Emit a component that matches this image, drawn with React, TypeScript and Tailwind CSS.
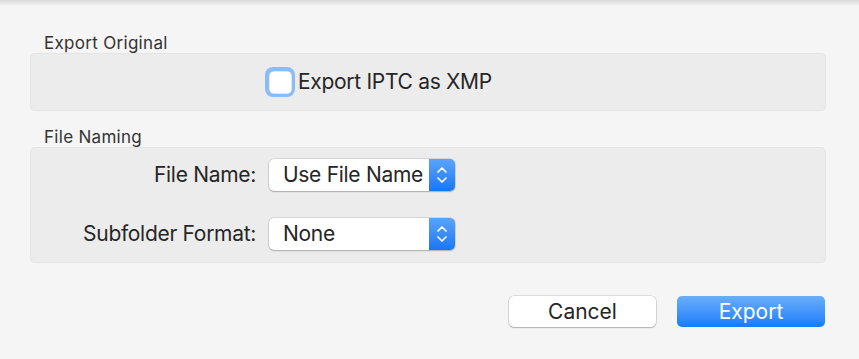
import React from "react";

function Stepper() {
  return (
    <div className="flex h-full w-[26px] items-center justify-center rounded-r-[5px] bg-gradient-to-b from-[#5aa3fa] to-[#1677f6]">
      <svg width="12" height="22" viewBox="0 0 12 22" fill="none">
        <path d="M2 8L6 4L10 8" stroke="white" strokeWidth="1.7" strokeLinecap="round" strokeLinejoin="round" />
        <path d="M2 14L6 18L10 14" stroke="white" strokeWidth="1.7" strokeLinecap="round" strokeLinejoin="round" />
      </svg>
    </div>
  );
}

function Select({ value }: { value: string }) {
  return (
    <div className="flex h-[32px] w-[186px] items-center rounded-[5px] bg-white shadow-[0_0_0_0.5px_rgba(0,0,0,0.18),0_1px_1.5px_rgba(0,0,0,0.2)]">
      <span className="flex-1 pl-[14px] text-[21px] tracking-[-0.3px] text-[#262626]">{value}</span>
      <Stepper />
    </div>
  );
}

export default function App() {
  return (
    <div
      className="relative h-[359px] w-[859px] overflow-hidden bg-[#f5f5f5]"
      style={{ fontFamily: '"Inter", "Liberation Sans", sans-serif' }}
    >
      {/* top shadow of the window edge */}
      <div className="absolute left-0 right-0 top-0 h-[6px] bg-gradient-to-b from-[#d9d9d9] to-[#f5f5f5]" />

      <div className="flex flex-col pl-[30px] pr-[33px] pt-[33px]">
        <div className="h-[20px] pl-[14px] text-[17px] leading-[20px] tracking-[0.3px] text-[#333]">Export Original</div>
        <div className="flex h-[58px] items-center rounded-[5px] border border-[#e4e4e4] bg-[#ececec] pl-[234px]">
          <div className="h-[30px] w-[30px] rounded-[8px] bg-[#8cbcf5] p-[3.5px]">
            <div className="h-full w-full rounded-[5px] bg-white shadow-[inset_0_0_0_0.5px_rgba(0,0,0,0.2)]" />
          </div>
          <span className="ml-[3px] text-[21px] tracking-[-0.3px] text-[#262626]">Export IPTC as XMP</span>
        </div>

        <div className="mt-[17px] h-[19px] pl-[14px] text-[17px] leading-[19px] tracking-[0.3px] text-[#333]">File Naming</div>
        <div className="flex h-[116px] flex-col gap-[27px] rounded-[5px] border border-[#e4e4e4] bg-[#ececec] pt-[10.5px]">
          <div className="flex items-center">
            <span className="w-[225px] text-right text-[21px] tracking-[-0.3px] text-[#262626]">File Name:</span>
            <div className="ml-[13px]">
              <Select value="Use File Name" />
            </div>
          </div>
          <div className="flex items-center">
            <span className="w-[225px] text-right text-[21px] tracking-[-0.3px] text-[#262626]">Subfolder Format:</span>
            <div className="ml-[13px]">
              <Select value="None" />
            </div>
          </div>
        </div>

        <div className="mt-[33px] flex justify-end gap-[21px] pr-[1px]">
          <button className="h-[31px] w-[147px] rounded-[5px] bg-white text-[21px] text-[#262626] shadow-[0_0_0_0.5px_rgba(0,0,0,0.2),0_1px_1.5px_rgba(0,0,0,0.2)]">
            Cancel
          </button>
          <button className="h-[31px] w-[148px] rounded-[5px] bg-gradient-to-b from-[#69aef9] to-[#127bfa] text-[21px] text-white">
            Export
          </button>
        </div>
      </div>
    </div>
  );
}
